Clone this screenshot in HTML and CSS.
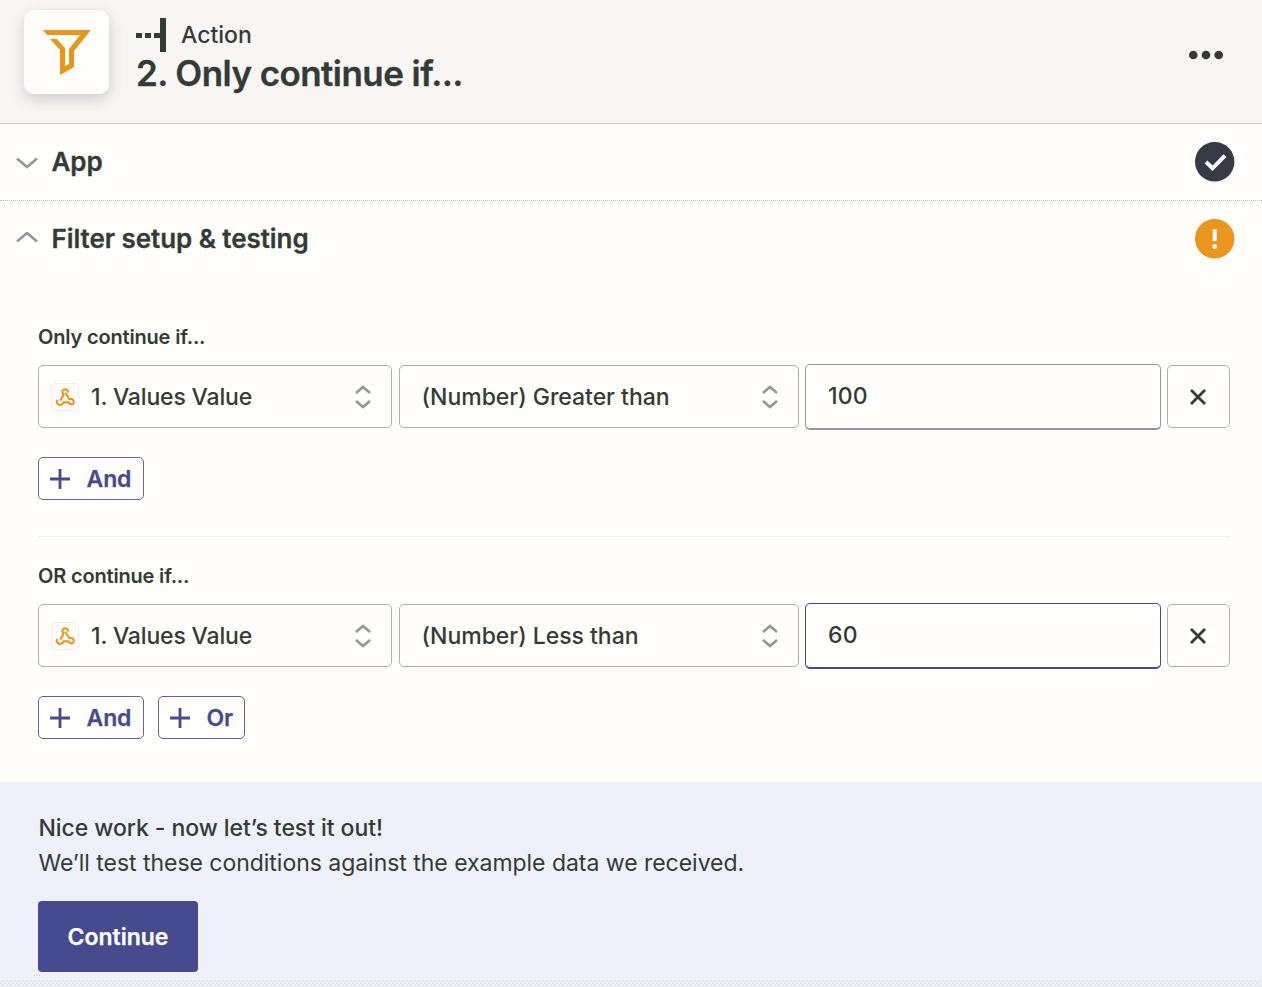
FILE: index.html
```html
<!DOCTYPE html>
<html lang="en">
<head>
<meta charset="utf-8">
<title>Only continue if...</title>
<link rel="stylesheet" href="styles.css">
</head>
<body>
<svg width="0" height="0" class="defs">
  <symbol id="hook" viewBox="0 0 28 28"><path d="M17 9.6C17.3 7.6 15.8 6.4 14 6.4C11.8 6.4 10.7 8.5 11.8 10.3L12.5 12.2L9.2 17.6M14.4 9.8L18.2 16H20C23.4 16.2 23.6 20.8 20.6 21.4C19.3 21.5 18.3 21 17.6 19.4H12.5C11.5 22.2 8.5 22.5 6.8 20.9C5.4 19.6 5.5 18 6.4 16.8" fill="none" stroke="#e8961e" stroke-width="2.1"/></symbol>
  <symbol id="sort" viewBox="0 0 16 24"><path d="M1 8L8 2L15 8M1 16L8 22L15 16" fill="none" stroke="#95959b" stroke-width="2.7"/></symbol>
  <symbol id="plus" viewBox="0 0 20 20"><path d="M0 10H20M10 0V20" fill="none" stroke="#454b8e" stroke-width="2.8"/></symbol>
  <symbol id="close" viewBox="0 0 16 16"><path d="M1 1L15 15M15 1L1 15" fill="none" stroke="#333b37" stroke-width="2.8"/></symbol>
</svg>
<header class="step-header">
  <div class="app-icon"><svg width="48" height="45" viewBox="0 0 48 45"><path d="M0 0H48L31 21V37L17 45V20L7 9H14L22 18V36L26 34V19L37 5H4Z" fill="#e8961e"/></svg></div>
  <div class="titles">
    <div class="kind"><svg width="31" height="34" viewBox="0 0 31 34"><path d="M0 17.5H6M9 17.5H15M18 17.5H25" stroke="#333b37" stroke-width="5"/><path d="M27 0V34" stroke="#333b37" stroke-width="6"/></svg><span>Action</span></div>
    <h1>2. Only continue if...</h1>
  </div>
  <svg class="more" width="34" height="10" viewBox="0 0 34 10" fill="#333b37"><circle cx="4.3" cy="5" r="4.3"/><circle cx="17" cy="5" r="4.3"/><circle cx="29.7" cy="5" r="4.3"/></svg>
</header>
<section class="section-row app-row">
  <svg width="22" height="13" viewBox="0 0 22 13"><path d="M1 2.5L11 11L21 2.5" fill="none" stroke="#95959b" stroke-width="2.6"/></svg>
  <h2>App</h2>
  <svg class="status" width="40" height="40" viewBox="0 0 40 40"><circle cx="19.7" cy="19.7" r="19.7" fill="#343b45"/><path d="M11 20L17.5 26.3L30 13.7" fill="none" stroke="#fff" stroke-width="4"/></svg>
</section>
<section class="section-row filter-row">
  <svg width="22" height="13" viewBox="0 0 22 13"><path d="M1 9.5L11 1L21 9.5" fill="none" stroke="#95959b" stroke-width="2.6"/></svg>
  <h2>Filter setup &amp; testing</h2>
  <svg class="status" width="40" height="40" viewBox="0 0 40 40"><circle cx="19.7" cy="19.7" r="19.7" fill="#e8961e"/><path d="M19.7 10V22" stroke="#fff" stroke-width="4"/><circle cx="19.7" cy="27.5" r="2.4" fill="#fff"/></svg>
</section>
<main>
  <div class="group">
    <h3>Only continue if...</h3>
    <div class="rule">
      <div class="select value"><span class="hook"><svg width="28" height="28"><use href="#hook"/></svg></span><span>1. Values Value</span><svg class="sort" width="16" height="24"><use href="#sort"/></svg></div>
      <div class="select operator"><span>(Number) Greater than</span><svg class="sort" width="16" height="24"><use href="#sort"/></svg></div>
      <div class="input"><span>100</span></div>
      <div class="remove"><svg width="16" height="16"><use href="#close"/></svg></div>
    </div>
    <div class="buttons"><div class="add"><svg width="20" height="20"><use href="#plus"/></svg><span>And</span></div></div>
  </div>
  <div class="group second">
    <h3>OR continue if...</h3>
    <div class="rule">
      <div class="select value"><span class="hook"><svg width="28" height="28"><use href="#hook"/></svg></span><span>1. Values Value</span><svg class="sort" width="16" height="24"><use href="#sort"/></svg></div>
      <div class="select operator"><span>(Number) Less than</span><svg class="sort" width="16" height="24"><use href="#sort"/></svg></div>
      <div class="input focused"><span>60</span></div>
      <div class="remove"><svg width="16" height="16"><use href="#close"/></svg></div>
    </div>
    <div class="buttons"><div class="add"><svg width="20" height="20"><use href="#plus"/></svg><span>And</span></div><div class="add or"><svg width="20" height="20"><use href="#plus"/></svg><span>Or</span></div></div>
  </div>
</main>
<footer>
  <p class="lead">Nice work - now let’s test it out!</p>
  <p>We’ll test these conditions against the example data we received.</p>
  <button>Continue</button>
  <div class="edge"></div>
</footer>
</body>
</html>
```
FILE: styles.css
```css
* { box-sizing: border-box; }
body { margin: 0; height: 987px; overflow: hidden; background: #fffefa; color: #333b37; font-family: Inter, "Liberation Sans", sans-serif; font-size: 23px; display: flex; flex-direction: column; }
h1, h2, h3, p { margin: 0; white-space: nowrap; }
svg { display: block; flex: none; }
.defs { position: absolute; }
.step-header { height: 124px; flex: none; background: #f9f5f3; border-bottom: 1px solid #cfcdca; display: flex; align-items: flex-start; padding: 10px 39px 0 24px; }
.app-icon { width: 85px; height: 84px; border-radius: 10px; background: #fffefa; box-shadow: 0 5px 14px rgba(60, 60, 80, .22); padding: 20px 0 0 19px; }
.titles { margin-left: 27px; padding-top: 8px; }
.kind { display: flex; align-items: center; height: 34px; gap: 14px; font-size: 23px; font-weight: 500; }
h1 { font-size: 35px; font-weight: 600; line-height: 42px; letter-spacing: -.57px; -webkit-text-stroke: .3px; }
.more { margin: 40px 0 0 auto; }
.section-row { height: 76px; flex: none; display: flex; align-items: center; padding: 0 27px 0 16px; }
.app-row { height: 77px; border-bottom: 1px dotted #bdbdc0; }
.filter-row { padding-bottom: 1px; }
h2 { font-size: 26px; font-weight: 600; line-height: 32px; margin-left: 13.5px; letter-spacing: -.06px; -webkit-text-stroke: .3px; }
.status { margin-left: auto; }
main { height: 505px; flex: none; padding: 46px 32px 0 38px; }
.group { height: 213px; }
.second { border-top: 1px solid #eeeef5; padding-top: 25px; height: 240px; }
h3 { font-size: 20px; font-weight: 600; line-height: 28px; margin-bottom: 13px; letter-spacing: -.17px; }
.rule { display: grid; grid-template-columns: 354px 400px 357px 63px; column-gap: 6px; align-items: start; height: 66px; }
.select, .remove { height: 63px; margin-top: 1px; border: 1px solid #b0b0b4; border-radius: 5px; display: flex; align-items: center; font-weight: 500; }
.select { padding: 0 20px 0 12px; }
.value { letter-spacing: -.16px; }
.operator { padding-left: 21.5px; margin-left: 1px; margin-right: -1px; letter-spacing: -.03px; }
.sort { margin-left: auto; }
.hook { width: 28px; height: 28px; border: 1px solid #eeeef3; border-radius: 4px; margin-right: 12px; }
.hook svg { margin: -1px; }
.input { height: 66px; margin-left: 1px; border: 1.5px solid #95959f; border-bottom-width: 2px; border-radius: 5px; padding: 0 22px 2px; display: flex; align-items: center; font-weight: 500; letter-spacing: .2px; }
.focused { border-color: #454b8e; }
.remove { padding-left: 22px; }
.buttons { display: flex; gap: 14px; margin-top: 27px; }
.add { width: 106px; height: 43px; border: 1px solid #62679b; border-radius: 5px; display: flex; align-items: center; padding-left: 11px; gap: 16.5px; color: #454b8e; font-weight: 600; letter-spacing: -.1px; -webkit-text-stroke: .25px; }
.or { width: 87px; }
footer { height: 205px; flex: none; background: #eef1fa; padding: 29px 0 0 38.5px; }
footer p { line-height: 34px; letter-spacing: -.03px; }
footer .lead { font-weight: 500; line-height: 35px; letter-spacing: -.06px; }
button { display: block; width: 160px; height: 71px; margin: 21px 0 0 -.5px; padding: 0; border: 0; border-radius: 4px; background: #454b8e; color: #fffefa; font: 600 23px Inter, sans-serif; -webkit-text-stroke: .25px; }
.edge { height: 7px; margin: 8px 0 0 -38.5px; background: repeating-linear-gradient(90deg, #d3d6e0 0 1px, transparent 1px 4px) 0 0 / 100% 1px no-repeat, conic-gradient(#d9dce5 25%, transparent 0 50%, #d9dce5 0 75%, transparent 0) 0 0 / 4px 4px; opacity: .45; }
```
